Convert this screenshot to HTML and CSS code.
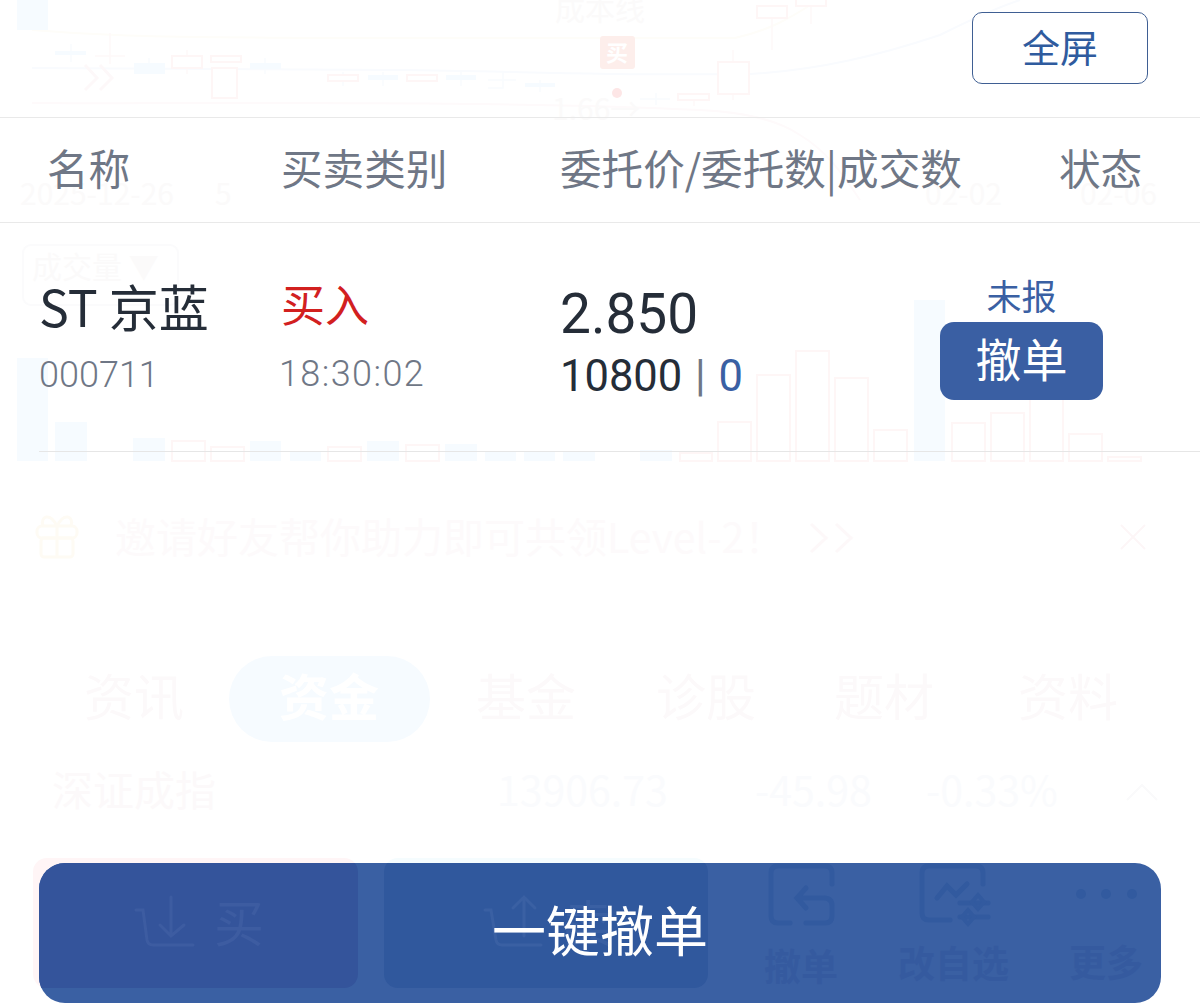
FILE: index.html
```html
<!DOCTYPE html>
<html lang="zh-CN">
<head>
    <meta charset="UTF-8">
    <meta name="viewport" content="width=device-width, initial-scale=1.0">
    <title>委托列表</title>
    <link rel="stylesheet" href="styles.css">
</head>
<body>

    <!-- Faded stock page behind the sheet -->
    <svg class="ghost" viewBox="0 0 1200 1003" aria-hidden="true">
        <g class="ghost-lines">
            <path class="line-yellow" d="M32 30 C90 35 130 37 320 38 L735 38 C770 30 790 18 812 4"/>
            <path class="line-blue" d="M32 68 L400 70 C520 71 600 76 750 74 C820 70 880 55 940 35 C960 25 990 10 1020 0"/>
            <path class="line-pink" d="M32 103 C200 104 500 100 700 110 C740 112 775 118 800 135 C825 150 840 170 860 200"/>
        </g>
        <g class="ghost-wicks-blue">
            <path d="M71 44V62M149 58V63M265 58V74M343 72V86M383 72V86M461 72V86M540 80V92M503 72V88H488M488 80H516M656 93V105M640 99H670"/>
        </g>
        <g class="ghost-wicks-red">
            <path d="M110 33V64M95 56H125M187 50V74M733 50V100M772 18V50M811 6V24M694 100V106"/>
        </g>
        <path class="ghost-arrows" d="M85 65L97 78L85 90M100 65L112 78L100 90"/>
        <g class="ghost-blue">
            <rect x="17" y="0" width="31" height="30"/>
            <rect x="134" y="63" width="31" height="11"/>
            <rect x="250" y="63" width="31" height="6"/>
            <rect x="55" y="51" width="31" height="4"/>
            <rect x="368" y="75" width="30" height="5"/>
            <rect x="446" y="75" width="30" height="5"/>
            <rect x="525" y="83" width="30" height="4"/>
            <rect x="17" y="358" width="31" height="103"/>
            <rect x="55" y="422" width="32" height="39"/>
            <rect x="133" y="438" width="32" height="23"/>
            <rect x="250" y="441" width="31" height="20"/>
            <rect x="290" y="451" width="31" height="10"/>
            <rect x="367" y="441" width="32" height="20"/>
            <rect x="445" y="444" width="32" height="17"/>
            <rect x="485" y="452" width="31" height="9"/>
            <rect x="524" y="452" width="31" height="9"/>
            <rect x="563" y="452" width="32" height="9"/>
            <rect x="640" y="450" width="32" height="11"/>
            <rect x="914" y="300" width="31" height="161"/>
        </g>
        <g class="ghost-red">
            <rect x="172" y="56" width="30" height="12"/>
            <rect x="211" y="56" width="30" height="6"/>
            <rect x="212" y="68" width="25" height="30"/>
            <rect x="328" y="75" width="30" height="6"/>
            <rect x="407" y="75" width="30" height="6"/>
            <rect x="757" y="6" width="30" height="12"/>
            <rect x="796" y="-6" width="30" height="12"/>
            <rect x="718" y="62" width="31" height="32"/>
            <rect x="678" y="94" width="31" height="6"/>
            <rect x="172" y="441" width="33" height="20"/>
            <rect x="211" y="447" width="33" height="14"/>
            <rect x="328" y="447" width="33" height="14"/>
            <rect x="406" y="445" width="33" height="16"/>
            <rect x="680" y="453" width="32" height="8"/>
            <rect x="718" y="422" width="33" height="39"/>
            <rect x="757" y="375" width="33" height="86"/>
            <rect x="796" y="351" width="33" height="110"/>
            <rect x="835" y="378" width="33" height="83"/>
            <rect x="874" y="430" width="33" height="31"/>
            <rect x="952" y="423" width="33" height="38"/>
            <rect x="991" y="413" width="33" height="48"/>
            <rect x="1030" y="378" width="33" height="83"/>
            <rect x="1069" y="434" width="33" height="27"/>
            <rect x="1108" y="457" width="33" height="4"/>
        </g>
        <rect x="600" y="36" width="35" height="33" rx="3" class="ghost-tag"/>
        <text x="606" y="61" class="ghost-tag-text">买</text>
        <circle cx="617" cy="93" r="5" class="ghost-dot"/>
        <rect x="23" y="245" width="155" height="60" rx="8" class="ghost-frame"/>
        <text x="555" y="20" class="ghost-text ghost-small">成本线</text>
        <text x="552" y="120" class="ghost-text ghost-small">1.66→</text>
        <text x="20" y="205" class="ghost-text ghost-small">2025-12-26</text>
        <text x="215" y="205" class="ghost-text ghost-small">5</text>
        <text x="925" y="205" class="ghost-text ghost-small">02-02</text>
        <text x="1080" y="205" class="ghost-text ghost-small">02-06</text>
        <text x="32" y="278" class="ghost-text ghost-small">成交量 ▼</text>
        <text x="115" y="553" class="ghost-text ghost-banner">邀请好友帮你助力即可共领Level-2！</text>
        <path class="ghost-arrows" d="M811 524L826 538L811 552M836 524L851 538L836 552"/>
        <path class="ghost-close" d="M1121 525L1145 549M1145 525L1121 549"/>
        <g class="ghost-gift">
            <rect x="37" y="526" width="40" height="12" rx="5"/>
            <rect x="41" y="538" width="32" height="19" rx="3"/>
            <path d="M57 526V557M57 526C50 512 40 516 43 526M57 526C64 512 74 516 71 526"/>
        </g>
        <rect x="229" y="656" width="201" height="86" rx="43" class="ghost-pill"/>
        <text x="84" y="716" class="ghost-text ghost-tab">资讯</text>
        <text x="279" y="716" class="ghost-tab ghost-tab-on">资金</text>
        <text x="476" y="716" class="ghost-text ghost-tab">基金</text>
        <text x="656" y="716" class="ghost-text ghost-tab">诊股</text>
        <text x="834" y="716" class="ghost-text ghost-tab">题材</text>
        <text x="1018" y="716" class="ghost-text ghost-tab">资料</text>
        <text x="52" y="806" class="ghost-text ghost-index">深证成指</text>
        <text x="497" y="806" class="ghost-blue-text ghost-index">13906.73</text>
        <text x="755" y="806" class="ghost-blue-text ghost-index">-45.98</text>
        <text x="926" y="806" class="ghost-blue-text ghost-index">-0.33%</text>
        <path d="M1127 800L1142 785L1157 800" class="ghost-chevron"/>
        <rect x="33" y="858" width="325" height="130" rx="14" class="ghost-buy"/>
        <rect x="384" y="858" width="324" height="130" rx="14" class="ghost-sell"/>
    </svg>

    <div class="sheet">
        <div class="toolbar">
            <button class="fullscreen-btn">全屏</button>
        </div>

        <div class="table-head">
            <span>名称</span>
            <span>买卖类别</span>
            <span>委托价/委托数|成交数</span>
            <span>状态</span>
        </div>

        <div class="order-row">
            <div class="cell">
                <div class="stock-name">ST 京蓝</div>
                <div class="sub-text">000711</div>
            </div>
            <div class="cell">
                <div class="side-buy">买入</div>
                <div class="sub-text time-text">18:30:02</div>
            </div>
            <div class="cell">
                <div class="price">2.850</div>
                <div class="amount">10800 <span class="amount-bar">|</span> <span class="amount-done">0</span></div>
            </div>
            <div class="status-cell">
                <div class="status-text">未报</div>
                <button class="cancel-btn">撤单</button>
            </div>
        </div>
    </div>

    <div class="cancel-all">
        <!-- Bottom nav showing through the button -->
        <svg class="cancel-all-ghost" viewBox="39 863 1122 140" aria-hidden="true">
            <path d="M33 858H344a14 14 0 0 1 14 14V974a14 14 0 0 1-14 14H33Z" class="nav-buy"/>
            <rect x="384" y="858" width="324" height="130" rx="14" class="nav-sell"/>
            <g class="nav-thin nav-thin-buy">
                <path d="M136 910L143 910L147 940Q148 945 153 945H193"/>
                <path d="M171 897V935M160 925L171 936L184 925"/>
            </g>
            <text x="214" y="942" class="nav-big nav-big-buy">买</text>
            <g class="nav-thin nav-thin-sell">
                <path d="M485 910L491 910L496 940Q497 945 502 945H541"/>
                <path d="M524 936V897M513 908L524 897L535 908"/>
            </g>
            <text x="563" y="942" class="nav-big nav-big-sell">卖</text>
            <g class="nav-icon">
                <path d="M790 923H778Q771 923 771 916V873Q771 866 778 866H825Q832 866 832 873V884"/>
                <path d="M806 888L797 898L806 908M797 898H824Q832 898 832 906V916Q832 923 825 923H806"/>
                <path d="M983 884V873Q983 866 976 866H929Q922 866 922 873V913Q922 920 929 920H950"/>
                <path d="M937 898L947 886L956 895L967 884"/>
                <path d="M960 903H988M960 917H988"/>
                <path d="M978 895L984 902L978 909L972 902Z" class="nav-diamond"/>
                <path d="M968 910L974 917L968 924L962 917Z" class="nav-diamond"/>
            </g>
            <circle cx="1081" cy="894" r="5" class="nav-dot"/>
            <circle cx="1106" cy="894" r="5" class="nav-dot"/>
            <circle cx="1132" cy="894" r="5" class="nav-dot"/>
            <text x="764" y="981" class="nav-label">撤单</text>
            <text x="898" y="978" class="nav-label">改自选</text>
            <text x="1069" y="977" class="nav-label">更多</text>
        </svg>
        <span class="cancel-all-label">一键撤单</span>
    </div>

</body>
</html>
```

FILE: styles.css
```css
* {
    box-sizing: border-box;
}

html, body {
    margin: 0;
    padding: 0;
}

body {
    position: relative;
    width: 1200px;
    height: 1003px;
    overflow: hidden;
    background-color: #fff;
    font-family: "Noto Sans CJK SC", Roboto, sans-serif;
    color: #252d38;
}

button {
    font-family: inherit;
    padding: 0;
    cursor: pointer;
}

/* Faded page */
.ghost {
    position: absolute;
    left: 0;
    top: 0;
    width: 1200px;
    height: 1003px;
    font-family: "Noto Sans CJK SC", sans-serif;
}

.ghost-lines path {
    fill: none;
    stroke-width: 2;
}

.line-yellow {
    stroke: #fefdf9;
}

.line-blue {
    stroke: #f9fbfe;
}

.line-pink {
    stroke: #fefafb;
}

.ghost-wicks-blue path,
.ghost-wicks-red path {
    fill: none;
    stroke-width: 1.5;
}

.ghost-wicks-blue path {
    stroke: #f9fcfe;
}

.ghost-wicks-red path {
    stroke: #fef9f9;
}

.ghost-arrows {
    fill: none;
    stroke: #fdf8f9;
    stroke-width: 3;
}

.ghost-close {
    fill: none;
    stroke: #fdf6f7;
    stroke-width: 2;
}

.ghost-blue rect {
    fill: #f6fbff;
}

.ghost-red rect {
    fill: #fff;
    stroke: #fef6f6;
    stroke-width: 2;
}

.ghost-tag {
    fill: #fdeeeb;
}

.ghost-tag-text {
    font-size: 22px;
    font-weight: 700;
    fill: #fff;
}

.ghost-dot {
    fill: #fde6e6;
}

.ghost-frame {
    fill: none;
    stroke: #fbfbfc;
    stroke-width: 2;
}

.ghost-text {
    fill: #fcf9fa;
}

.ghost-small {
    font-size: 30px;
    fill: #fbfafa;
}

.ghost-banner {
    font-size: 41px;
    fill: #fdfafb;
}

.ghost-gift rect,
.ghost-gift path {
    fill: none;
    stroke: #fefbf4;
    stroke-width: 3;
}

.ghost-pill {
    fill: #f6fbff;
}

.ghost-tab {
    font-size: 50px;
}

.ghost-tab-on {
    fill: #fff;
    font-weight: 700;
}

.ghost-index {
    font-size: 41px;
}

.ghost-blue-text {
    fill: #fafbfd;
}

.ghost-chevron {
    fill: none;
    stroke: #fafafb;
    stroke-width: 2;
}

.ghost-buy {
    fill: #fff5f6;
}

.ghost-sell {
    fill: #f5fcfe;
}

/* Order sheet */
.sheet {
    position: relative;
}

.toolbar {
    display: flex;
    justify-content: flex-end;
    height: 118px;
    padding: 12px 52px 0 0;
    border-bottom: 1px solid #e9e9e9;
}

.fullscreen-btn {
    width: 176px;
    height: 72px;
    padding-bottom: 5px;
    background: rgba(255, 255, 255, 0.6);
    border: 1px solid #3f5f93;
    border-radius: 10px;
    font-size: 38px;
    color: #2f5b9e;
}

.table-head {
    display: grid;
    grid-template-columns: 234px 279px 499px auto;
    align-items: center;
    height: 105px;
    padding: 0 0 4px 47px;
    border-bottom: 1px solid #e9e9e9;
    font-size: 41.6px;
    line-height: 1;
    color: #6f7786;
}

.order-row {
    display: grid;
    grid-template-columns: 242px 279px 380px 163px;
    align-items: start;
    height: 229px;
    margin-left: 39px;
    padding: 49px 0 0 0;
    border-bottom: 1px solid #e6e6e6;
}

.stock-name {
    font-size: 50px;
    line-height: 66px;
}

.sub-text {
    margin-top: 11px;
    font-family: Roboto, sans-serif;
    font-size: 36px;
    font-weight: 300;
    line-height: 52px;
    color: #6f7786;
}

.time-text {
    margin: 14px 0 0 -2px;
    letter-spacing: 1.4px;
}

.side-buy {
    font-size: 44px;
    line-height: 62px;
    color: #d2201f;
}

.price {
    padding-top: 13px;
    font-family: Roboto, sans-serif;
    font-size: 55px;
    line-height: 58px;
}

.amount {
    margin-top: 6px;
    font-family: Roboto, sans-serif;
    font-size: 43.5px;
    line-height: 56px;
    word-spacing: 2px;
}

.amount-bar {
    color: #6f7786;
}

.amount-done {
    color: #3a60a3;
}

.status-cell {
    display: flex;
    flex-direction: column;
    align-items: center;
}

.status-text {
    font-size: 35px;
    line-height: 46px;
    color: #3a60a3;
}

.cancel-btn {
    width: 163px;
    height: 78px;
    margin-top: 4px;
    padding-bottom: 8px;
    background-color: #3a5fa3;
    border: none;
    border-radius: 14px;
    font-size: 46px;
    color: #fff;
}

/* One-click cancel */
.cancel-all {
    position: absolute;
    left: 39px;
    top: 863px;
    display: flex;
    align-items: center;
    justify-content: center;
    width: 1122px;
    height: 140px;
    padding-bottom: 10px;
    overflow: hidden;
    background-color: #3a60a3;
    border-radius: 26px;
}

.cancel-all-ghost {
    position: absolute;
    left: 0;
    top: 0;
    width: 1122px;
    height: 140px;
}

.cancel-all-label {
    position: relative;
    font-size: 54px;
    color: #fff;
}

.nav-buy {
    fill: #34549b;
}

.nav-sell {
    fill: #30589d;
}

.nav-icon path {
    fill: none;
    stroke: #325a9f;
    stroke-width: 5;
    stroke-linecap: round;
}

.nav-icon .nav-diamond {
    stroke-width: 4;
}

.nav-thin path {
    fill: none;
    stroke-width: 3;
    stroke-linecap: round;
}

.nav-thin-buy path {
    stroke: #3d5ca1;
}

.nav-thin-sell path {
    stroke: #3a60a3;
}

.nav-big {
    font-size: 50px;
}

.nav-big-buy {
    fill: #3d5ca1;
}

.nav-big-sell {
    fill: #3a60a3;
}

.nav-dot {
    fill: #325a9f;
}

.nav-label {
    font-size: 37px;
    font-weight: 700;
    fill: #355a9f;
}
```
